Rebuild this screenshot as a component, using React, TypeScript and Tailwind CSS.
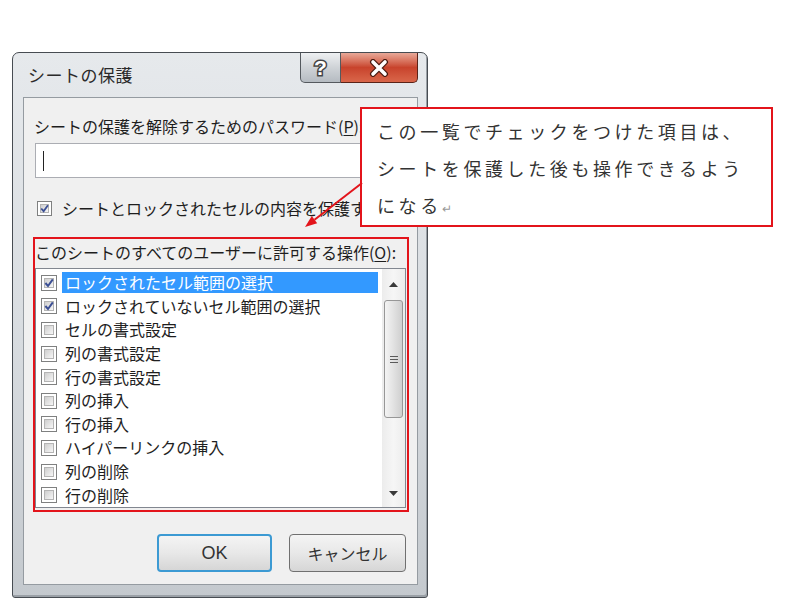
import React from "react";

const FONT = "font-['Noto_Sans_CJK_JP','Noto_Sans',sans-serif]";

function Check({ checked, size = 16 }: { checked?: boolean; size?: number }) {
  return (
    <div
      className="shrink-0 border border-[#7f8080] bg-white p-[2px]"
      style={{ width: size, height: size }}
    >
      <div className="relative w-full h-full border border-[#b4b4b4] bg-gradient-to-br from-[#cfcfcf] to-[#f6f6f6]">
        {checked && (
          <svg viewBox="0 0 10 10" className="absolute -inset-[1px] w-[calc(100%+2px)] h-[calc(100%+2px)]">
            <path d="M1.4 5 L4 8 L8.8 1.4" fill="none" stroke="#3b4f94" strokeWidth="2" />
          </svg>
        )}
      </div>
    </div>
  );
}

const items = [
  { label: "ロックされたセル範囲の選択", checked: true, selected: true },
  { label: "ロックされていないセル範囲の選択", checked: true },
  { label: "セルの書式設定" },
  { label: "列の書式設定" },
  { label: "行の書式設定" },
  { label: "列の挿入" },
  { label: "行の挿入" },
  { label: "ハイパーリンクの挿入" },
  { label: "列の削除" },
  { label: "行の削除" },
];

function Dialog() {
  return (
    <div className="w-[416px] h-[546px] flex flex-col border border-[#474c52] rounded-t-[7px] rounded-b-[3px] bg-gradient-to-b from-[#e6e9ec] via-[#d9dde1] to-[#c4c9ce] pl-[10px] pr-[9px] pb-[12px] shadow-[inset_-1px_-2px_0_#9aa0a6]">
      {/* title bar */}
      <div className="h-[44px] flex items-start shrink-0">
        <div className="h-[44px] flex items-center pl-[5px] text-[17px] text-[#2a2a2a] tracking-[0.5px]">
          シートの保護
        </div>
        <div className="ml-auto flex">
          <div className="w-[41px] h-[30px] border border-[#54595e] border-t-0 rounded-bl-[5px] bg-gradient-to-b from-[#eef0f2] via-[#cfd3d7] to-[#b5bbc1] flex items-center justify-center">
            <span className="text-[21px] font-bold text-white leading-none [-webkit-text-stroke:3px_#444] [paint-order:stroke_fill] font-['Liberation_Sans',sans-serif]">
              ?
            </span>
          </div>
          <div className="w-[77px] h-[30px] border border-[#5a2318] border-t-0 border-l-0 rounded-br-[5px] bg-gradient-to-b from-[#e8a898] via-[#c8432c] to-[#d9664a] flex items-center justify-center">
            <svg width="22" height="18" viewBox="0 0 22 18">
              <path d="M5 3 L17 15 M17 3 L5 15" stroke="#4a1a10" strokeWidth="6" strokeLinecap="round" />
              <path d="M5 3 L17 15 M17 3 L5 15" stroke="#ffffff" strokeWidth="3.6" strokeLinecap="round" />
            </svg>
          </div>
        </div>
      </div>

      {/* client */}
      <div className="flex-1 border border-[#959ba1] bg-[#f0f0f0] pl-[10px] pr-[11px] flex flex-col text-[16px] text-[#1e1e1e]">
        <div className="mt-[18px] leading-[20px] whitespace-nowrap">
          シートの保護を解除するためのパスワード(<span className="underline underline-offset-2">P</span>):
        </div>
        <div className="mt-[7px] h-[35px] ml-[1px] border border-[#abadb3] bg-white flex items-center pl-[7px]">
          <div className="w-[1px] h-[20px] bg-[#222]" />
        </div>
        <div className="mt-[20px] h-[20px] flex items-center pl-[3px] whitespace-nowrap">
          <Check checked size={15} />
          <span className="ml-[10px] leading-[20px]">シートとロックされたセルの内容を保護する(C)</span>
        </div>

        {/* red highlighted group */}
        <div className="mt-[19px] -ml-[1px] w-[376px] border-2 border-[#e3141b] flex flex-col pb-[2px]">
          <div className="mt-[3px] leading-[20px] whitespace-nowrap">
            このシートのすべてのユーザーに許可する操作(<span className="underline underline-offset-2">O</span>):
          </div>
          <div className="mt-[6px] h-[240px] w-[371px] border border-[#828790] bg-white flex">
            <div className="flex-1 pt-[2px] flex flex-col">
              {items.map((it) => (
                <div key={it.label} className="h-[23.6px] flex items-center pl-[5px] shrink-0">
                  <Check checked={it.checked} size={16} />
                  <div
                    className={
                      it.selected
                        ? "ml-[5px] w-[316px] h-[21px] pl-[3px] leading-[21px] bg-[#3399ff] text-white whitespace-nowrap"
                        : "ml-[5px] w-[316px] h-[21px] pl-[3px] leading-[21px] whitespace-nowrap"
                    }
                  >
                    {it.label}
                  </div>
                </div>
              ))}
            </div>
            {/* scrollbar */}
            <div className="w-[23px] flex flex-col bg-gradient-to-r from-[#ececec] via-[#f6f6f6] to-[#ececec]">
              <div className="h-[31px] flex items-center justify-center">
                <svg width="9" height="5" viewBox="0 0 9 5">
                  <path d="M0 5 L4.5 0 L9 5 Z" fill="#3a3a3a" />
                </svg>
              </div>
              <div className="mx-[2px] h-[118px] rounded-[3px] border border-[#979797] bg-gradient-to-r from-[#f4f4f4] via-[#e2e2e2] to-[#cfcfcf] flex flex-col items-center justify-center gap-[2px]">
                <div className="w-[8px] h-[1px] bg-[#5a5a5a]" />
                <div className="w-[8px] h-[1px] bg-[#5a5a5a]" />
                <div className="w-[8px] h-[1px] bg-[#5a5a5a]" />
              </div>
              <div className="flex-1" />
              <div className="h-[28px] flex items-center justify-center">
                <svg width="9" height="5" viewBox="0 0 9 5">
                  <path d="M0 0 L4.5 5 L9 0 Z" fill="#3a3a3a" />
                </svg>
              </div>
            </div>
          </div>
        </div>

        {/* buttons */}
        <div className="mt-[22px] flex justify-end gap-[17px]">
          <div className="w-[115px] h-[38px] rounded-[4px] border-2 border-[#3c9ad3] bg-gradient-to-b from-[#f4f4f4] via-[#e8e8e8] to-[#d6d6d6] flex items-center justify-center text-[#333] font-['Liberation_Sans','Noto_Sans',sans-serif] text-[18px]">
            OK
          </div>
          <div className="w-[117px] h-[38px] rounded-[4px] border border-[#707070] bg-gradient-to-b from-[#f4f4f4] via-[#e8e8e8] to-[#d6d6d6] flex items-center justify-center text-[#333]">
            キャンセル
          </div>
        </div>
      </div>
    </div>
  );
}

export default function App() {
  return (
    <div className={`relative w-[800px] h-[614px] bg-white overflow-hidden ${FONT}`}>
      <div className="pt-[52px] pl-[12px]">
        <Dialog />
      </div>

      {/* callout */}
      <div className="absolute left-[360px] top-[107px] w-[413px] h-[120px] border-2 border-[#e3141b] bg-white pl-[15px] pt-[4px] text-[18px] text-[#333] tracking-[3.6px] whitespace-nowrap">
        <div className="h-[37px] leading-[37px]">この一覧でチェックをつけた項目は、</div>
        <div className="h-[37px] leading-[37px]">シートを保護した後も操作できるよう</div>
        <div className="h-[37px] leading-[37px]">
          になる<span className="text-[12px] text-[#999] tracking-normal">↵</span>
        </div>
      </div>

      {/* arrow */}
      <svg className="absolute left-0 top-0 pointer-events-none" width="800" height="614">
        <line x1="362" y1="183" x2="314.5" y2="219.7" stroke="#e3141b" strokeWidth="2" />
        <polygon points="305,227 317.2,223.3 311.8,216.1" fill="#e3141b" />
      </svg>
    </div>
  );
}
